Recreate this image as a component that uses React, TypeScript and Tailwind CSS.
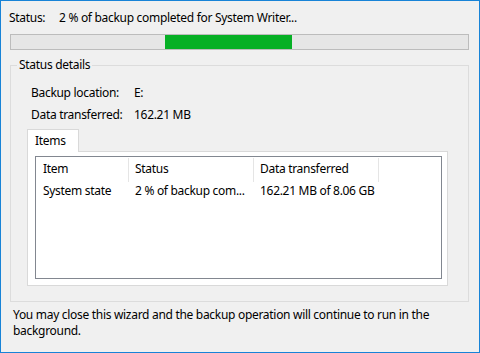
import React from "react";

export default function App() {
  return (
    <div
      className="w-[480px] h-[353px] border border-[#1883d7] bg-[#f0f0f0] text-[12px] leading-[16px] tracking-[-0.3px] text-black overflow-hidden"
      style={{ fontFamily: '"Noto Sans", "Open Sans", sans-serif' }}
    >
      {/* Status row */}
      <div className="flex pl-[8px] pt-[9px]">
        <div className="w-[50px]">Status:</div>
        <div>2 % of backup completed for System Writer...</div>
      </div>

      {/* Progress bar */}
      <div className="ml-[9px] mt-[8px] w-[459px] h-[16px] border border-[#bcbcbc] bg-[#e6e6e6] flex">
        <div className="w-[154px]" />
        <div className="w-[127px] h-full bg-[#06b025]" />
      </div>

      {/* Group box */}
      <div className="relative ml-[9px] mt-[15px] w-[459px] h-[237px] border border-[#dcdcdc]">
        <span className="absolute left-[6px] -top-[9px] px-[2px] bg-[#f0f0f0]">Status details</span>

        <div className="pl-[20px] pt-[19px] flex flex-col gap-[6px]">
          <div className="flex">
            <div className="w-[103px]">Backup location:</div>
            <div>E:</div>
          </div>
          <div className="flex">
            <div className="w-[103px]">Data transferred:</div>
            <div>162.21 MB</div>
          </div>
        </div>

        {/* Tabs */}
        <div className="ml-[16px] mt-[6px]">
          <div className="relative z-10 -mb-px w-[52px] h-[23px] bg-white border border-b-0 border-[#d9d9d9] pl-[7px] pt-[3px]">
            Items
          </div>
          <div className="w-[421px] h-[135px] bg-white border border-[#d9d9d9] pl-[7px] pt-[4px]">
            {/* List view */}
            <div className="w-[407px] h-[123px] border border-[#828790] bg-white">
              <div className="flex h-[25px]">
                <div className="w-[93px] h-[24px] mt-[1px] border-r border-[#e5e5e5] pl-[7px] pt-[3px]">Item</div>
                <div className="w-[125px] h-[24px] mt-[1px] border-r border-[#e5e5e5] pl-[6px] pt-[3px]">Status</div>
                <div className="w-[125px] h-[24px] mt-[1px] border-r border-[#e5e5e5] pl-[6px] pt-[3px]">Data transferred</div>
              </div>
              <div className="flex h-[17px] pt-[1px]">
                <div className="w-[93px] pl-[7px] whitespace-nowrap">System state</div>
                <div className="w-[125px] pl-[6px] whitespace-nowrap">2 % of backup com...</div>
                <div className="w-[125px] pl-[6px] whitespace-nowrap">162.21 MB of 8.06 GB</div>
              </div>
            </div>
          </div>
        </div>
      </div>

      {/* Footer */}
      <div className="pl-[12px] pt-[5px] pr-[20px]">
        You may close this wizard and the backup operation will continue to run in the background.
      </div>
    </div>
  );
}
